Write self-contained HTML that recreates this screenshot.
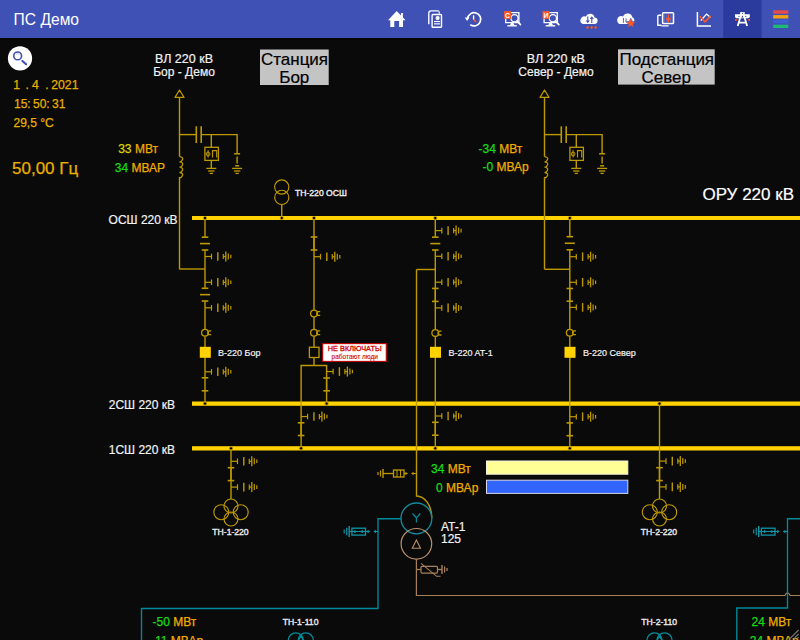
<!DOCTYPE html>
<html><head><meta charset="utf-8"><title>ПС Демо</title>
<style>
html,body{margin:0;padding:0;background:#0a0a0a;width:800px;height:640px;overflow:hidden;font-family:"Liberation Sans",sans-serif;}
svg{position:absolute;left:0;top:0;display:block;}
text{font-family:"Liberation Sans",sans-serif;}
</style></head><body>
<svg width="800" height="640" viewBox="0 0 800 640">
<rect x="0" y="0" width="800" height="640" fill="#0a0a0a"/>
<rect x="192" y="216" width="608" height="4" fill="#ffd200"/>
<rect x="192" y="401.5" width="608" height="4.3" fill="#ffd200"/>
<rect x="192" y="446.2" width="608" height="4.3" fill="#ffd200"/>
<path d="M179.5,90 L175.0,97.4 H184.0 Z" stroke="#bd9900" stroke-width="1.2" fill="none" stroke-linejoin="round"/>
<line x1="179.5" y1="97.4" x2="179.5" y2="156.6" stroke="#bd9900" stroke-width="1.4"/>
<path d="M179.5,156.6 q4,0.5 3,3 q-1,2.5 -3,2.3 q4,0.5 3,3 q-1,2.5 -3,2.3 q4,0.5 3,3 q-1,2.5 -3,2.3 q4,0.5 3,3 q-1,2.5 -3,2.3" stroke="#bd9900" stroke-width="1.3" fill="none"/>
<line x1="179.5" y1="176.9" x2="179.5" y2="269.3" stroke="#bd9900" stroke-width="1.4"/>
<line x1="179.5" y1="134.6" x2="196.3" y2="134.6" stroke="#bd9900" stroke-width="1.4"/>
<line x1="196.3" y1="126.3" x2="196.3" y2="143" stroke="#bd9900" stroke-width="1.6"/>
<line x1="201.2" y1="126.3" x2="201.2" y2="143" stroke="#bd9900" stroke-width="1.6"/>
<path d="M201.2,134.6 H237.1 V153.8" stroke="#bd9900" stroke-width="1.4" fill="none"/>
<line x1="211.3" y1="134.6" x2="211.3" y2="147.3" stroke="#bd9900" stroke-width="1.4"/>
<rect x="204.9" y="147.3" width="13.5" height="13.1" fill="none" stroke="#bd9900" stroke-width="1.3"/>
<path d="M208.1,150.3 V157.6 M212.5,157.6 V150.6 H216.7 V157.6" stroke="#bd9900" stroke-width="1.1" fill="none"/>
<ellipse cx="208.1" cy="154" rx="1.9" ry="1.9" fill="none" stroke="#bd9900" stroke-width="1"/>
<line x1="211.3" y1="160.4" x2="211.3" y2="168.4" stroke="#bd9900" stroke-width="1.4"/>
<line x1="206.3" y1="168.4" x2="216.3" y2="168.4" stroke="#bd9900" stroke-width="1.3"/>
<line x1="208.10000000000002" y1="171.0" x2="214.5" y2="171.0" stroke="#bd9900" stroke-width="1.3"/>
<line x1="209.70000000000002" y1="173.4" x2="212.9" y2="173.4" stroke="#bd9900" stroke-width="1.3"/>
<line x1="234.1" y1="153.8" x2="240.1" y2="153.8" stroke="#bd9900" stroke-width="1.5"/>
<line x1="237.1" y1="156.5" x2="237.1" y2="163.5" stroke="#bd9900" stroke-width="1.4"/>
<line x1="235.1" y1="165.8" x2="239.1" y2="165.8" stroke="#bd9900" stroke-width="1.5"/>
<line x1="232.1" y1="168.4" x2="242.1" y2="168.4" stroke="#bd9900" stroke-width="1.3"/>
<line x1="233.9" y1="171.0" x2="240.29999999999998" y2="171.0" stroke="#bd9900" stroke-width="1.3"/>
<line x1="235.5" y1="173.4" x2="238.7" y2="173.4" stroke="#bd9900" stroke-width="1.3"/>
<path d="M544.5,90 L540.0,97.4 H549.0 Z" stroke="#bd9900" stroke-width="1.2" fill="none" stroke-linejoin="round"/>
<line x1="544.5" y1="97.4" x2="544.5" y2="156.6" stroke="#bd9900" stroke-width="1.4"/>
<path d="M544.5,156.6 q4,0.5 3,3 q-1,2.5 -3,2.3 q4,0.5 3,3 q-1,2.5 -3,2.3 q4,0.5 3,3 q-1,2.5 -3,2.3 q4,0.5 3,3 q-1,2.5 -3,2.3" stroke="#bd9900" stroke-width="1.3" fill="none"/>
<line x1="544.5" y1="176.9" x2="544.5" y2="269.3" stroke="#bd9900" stroke-width="1.4"/>
<line x1="544.5" y1="134.6" x2="561.3" y2="134.6" stroke="#bd9900" stroke-width="1.4"/>
<line x1="561.3" y1="126.3" x2="561.3" y2="143" stroke="#bd9900" stroke-width="1.6"/>
<line x1="566.2" y1="126.3" x2="566.2" y2="143" stroke="#bd9900" stroke-width="1.6"/>
<path d="M566.2,134.6 H602.1 V153.8" stroke="#bd9900" stroke-width="1.4" fill="none"/>
<line x1="576.3" y1="134.6" x2="576.3" y2="147.3" stroke="#bd9900" stroke-width="1.4"/>
<rect x="569.9" y="147.3" width="13.5" height="13.1" fill="none" stroke="#bd9900" stroke-width="1.3"/>
<path d="M573.1,150.3 V157.6 M577.5,157.6 V150.6 H581.7 V157.6" stroke="#bd9900" stroke-width="1.1" fill="none"/>
<ellipse cx="573.1" cy="154" rx="1.9" ry="1.9" fill="none" stroke="#bd9900" stroke-width="1"/>
<line x1="576.3" y1="160.4" x2="576.3" y2="168.4" stroke="#bd9900" stroke-width="1.4"/>
<line x1="571.3" y1="168.4" x2="581.3" y2="168.4" stroke="#bd9900" stroke-width="1.3"/>
<line x1="573.0999999999999" y1="171.0" x2="579.5" y2="171.0" stroke="#bd9900" stroke-width="1.3"/>
<line x1="574.6999999999999" y1="173.4" x2="577.9" y2="173.4" stroke="#bd9900" stroke-width="1.3"/>
<line x1="599.1" y1="153.8" x2="605.1" y2="153.8" stroke="#bd9900" stroke-width="1.5"/>
<line x1="602.1" y1="156.5" x2="602.1" y2="163.5" stroke="#bd9900" stroke-width="1.4"/>
<line x1="600.1" y1="165.8" x2="604.1" y2="165.8" stroke="#bd9900" stroke-width="1.5"/>
<line x1="597.1" y1="168.4" x2="607.1" y2="168.4" stroke="#bd9900" stroke-width="1.3"/>
<line x1="598.9" y1="171.0" x2="605.3000000000001" y2="171.0" stroke="#bd9900" stroke-width="1.3"/>
<line x1="600.5" y1="173.4" x2="603.7" y2="173.4" stroke="#bd9900" stroke-width="1.3"/>
<line x1="179.5" y1="269" x2="205" y2="269" stroke="#bd9900" stroke-width="1.4"/>
<line x1="544.5" y1="269.3" x2="569.8" y2="269.3" stroke="#bd9900" stroke-width="1.4"/>
<circle cx="281.75" cy="187" r="7.1" fill="none" stroke="#bd9900" stroke-width="1.15"/>
<circle cx="281.75" cy="197.4" r="7.1" fill="none" stroke="#bd9900" stroke-width="1.15"/>
<line x1="281.75" y1="204.5" x2="281.75" y2="218" stroke="#bd9900" stroke-width="1.4"/>
<line x1="205" y1="218" x2="205" y2="237.2" stroke="#bd9900" stroke-width="1.4"/>
<line x1="201.7" y1="237.2" x2="208.3" y2="237.2" stroke="#bd9900" stroke-width="1.6"/>
<line x1="201.7" y1="250" x2="208.3" y2="250" stroke="#bd9900" stroke-width="1.6"/>
<line x1="200" y1="243.6" x2="210" y2="243.6" stroke="#bd9900" stroke-width="1.6"/>
<line x1="205" y1="250" x2="205" y2="288.3" stroke="#bd9900" stroke-width="1.4"/>
<line x1="205" y1="256.5" x2="211.5" y2="256.5" stroke="#bd9900" stroke-width="1.2"/>
<line x1="211.5" y1="253.7" x2="211.5" y2="259.3" stroke="#bd9900" stroke-width="1.2"/>
<line x1="217.8" y1="252.2" x2="217.8" y2="260.8" stroke="#bd9900" stroke-width="1.4"/>
<line x1="223.3" y1="253.9" x2="223.3" y2="259.1" stroke="#bd9900" stroke-width="1.2"/>
<line x1="223.3" y1="256.5" x2="225.8" y2="256.5" stroke="#bd9900" stroke-width="1.2"/>
<line x1="225.8" y1="251.5" x2="225.8" y2="261.5" stroke="#bd9900" stroke-width="1.3"/>
<line x1="228.3" y1="253.5" x2="228.3" y2="259.5" stroke="#bd9900" stroke-width="1.2"/>
<line x1="230.8" y1="254.7" x2="230.8" y2="258.3" stroke="#bd9900" stroke-width="1.2"/>
<line x1="205" y1="282.3" x2="211.5" y2="282.3" stroke="#bd9900" stroke-width="1.2"/>
<line x1="211.5" y1="279.5" x2="211.5" y2="285.1" stroke="#bd9900" stroke-width="1.2"/>
<line x1="217.8" y1="278.0" x2="217.8" y2="286.6" stroke="#bd9900" stroke-width="1.4"/>
<line x1="223.3" y1="279.7" x2="223.3" y2="284.90000000000003" stroke="#bd9900" stroke-width="1.2"/>
<line x1="223.3" y1="282.3" x2="225.8" y2="282.3" stroke="#bd9900" stroke-width="1.2"/>
<line x1="225.8" y1="277.3" x2="225.8" y2="287.3" stroke="#bd9900" stroke-width="1.3"/>
<line x1="228.3" y1="279.3" x2="228.3" y2="285.3" stroke="#bd9900" stroke-width="1.2"/>
<line x1="230.8" y1="280.5" x2="230.8" y2="284.1" stroke="#bd9900" stroke-width="1.2"/>
<line x1="201.7" y1="288.3" x2="208.3" y2="288.3" stroke="#bd9900" stroke-width="1.6"/>
<line x1="201.7" y1="301" x2="208.3" y2="301" stroke="#bd9900" stroke-width="1.6"/>
<line x1="200" y1="294.65" x2="210" y2="294.65" stroke="#bd9900" stroke-width="1.6"/>
<line x1="205" y1="301" x2="205" y2="329.2" stroke="#bd9900" stroke-width="1.4"/>
<line x1="205" y1="307.8" x2="211.5" y2="307.8" stroke="#bd9900" stroke-width="1.2"/>
<line x1="211.5" y1="305.0" x2="211.5" y2="310.6" stroke="#bd9900" stroke-width="1.2"/>
<line x1="217.8" y1="303.5" x2="217.8" y2="312.1" stroke="#bd9900" stroke-width="1.4"/>
<line x1="223.3" y1="305.2" x2="223.3" y2="310.40000000000003" stroke="#bd9900" stroke-width="1.2"/>
<line x1="223.3" y1="307.8" x2="225.8" y2="307.8" stroke="#bd9900" stroke-width="1.2"/>
<line x1="225.8" y1="302.8" x2="225.8" y2="312.8" stroke="#bd9900" stroke-width="1.3"/>
<line x1="228.3" y1="304.8" x2="228.3" y2="310.8" stroke="#bd9900" stroke-width="1.2"/>
<line x1="230.8" y1="306.0" x2="230.8" y2="309.6" stroke="#bd9900" stroke-width="1.2"/>
<circle cx="205" cy="332.8" r="3.4" fill="none" stroke="#bd9900" stroke-width="1.3"/>
<path d="M211.2,330.90000000000003 H209.6 A1.9,1.9 0 0 0 209.6,334.7 H211.2" stroke="#bd9900" stroke-width="1.3" fill="none"/>
<line x1="205" y1="336.4" x2="205" y2="377.8" stroke="#bd9900" stroke-width="1.4"/>
<rect x="199.8" y="346.8" width="11" height="11" fill="#ffd200"/>
<line x1="205" y1="371.8" x2="211.5" y2="371.8" stroke="#bd9900" stroke-width="1.2"/>
<line x1="211.5" y1="369.0" x2="211.5" y2="374.6" stroke="#bd9900" stroke-width="1.2"/>
<line x1="217.8" y1="367.5" x2="217.8" y2="376.1" stroke="#bd9900" stroke-width="1.4"/>
<line x1="223.3" y1="369.2" x2="223.3" y2="374.40000000000003" stroke="#bd9900" stroke-width="1.2"/>
<line x1="223.3" y1="371.8" x2="225.8" y2="371.8" stroke="#bd9900" stroke-width="1.2"/>
<line x1="225.8" y1="366.8" x2="225.8" y2="376.8" stroke="#bd9900" stroke-width="1.3"/>
<line x1="228.3" y1="368.8" x2="228.3" y2="374.8" stroke="#bd9900" stroke-width="1.2"/>
<line x1="230.8" y1="370.0" x2="230.8" y2="373.6" stroke="#bd9900" stroke-width="1.2"/>
<line x1="201.7" y1="377.8" x2="208.3" y2="377.8" stroke="#bd9900" stroke-width="1.6"/>
<line x1="201.7" y1="390.8" x2="208.3" y2="390.8" stroke="#bd9900" stroke-width="1.6"/>
<line x1="205" y1="377.8" x2="205" y2="390.8" stroke="#bd9900" stroke-width="1.4"/>
<line x1="205" y1="390.8" x2="205" y2="403.5" stroke="#bd9900" stroke-width="1.4"/>
<line x1="314" y1="218" x2="314" y2="309.9" stroke="#bd9900" stroke-width="1.4"/>
<line x1="310.7" y1="237" x2="317.3" y2="237" stroke="#bd9900" stroke-width="1.6"/>
<line x1="310.7" y1="250" x2="317.3" y2="250" stroke="#bd9900" stroke-width="1.6"/>
<line x1="314" y1="237" x2="314" y2="250" stroke="#bd9900" stroke-width="1.4"/>
<line x1="314" y1="256.7" x2="320.5" y2="256.7" stroke="#bd9900" stroke-width="1.2"/>
<line x1="320.5" y1="253.89999999999998" x2="320.5" y2="259.5" stroke="#bd9900" stroke-width="1.2"/>
<line x1="326.8" y1="252.39999999999998" x2="326.8" y2="261.0" stroke="#bd9900" stroke-width="1.4"/>
<line x1="332.3" y1="254.1" x2="332.3" y2="259.3" stroke="#bd9900" stroke-width="1.2"/>
<line x1="332.3" y1="256.7" x2="334.8" y2="256.7" stroke="#bd9900" stroke-width="1.2"/>
<line x1="334.8" y1="251.7" x2="334.8" y2="261.7" stroke="#bd9900" stroke-width="1.3"/>
<line x1="337.3" y1="253.7" x2="337.3" y2="259.7" stroke="#bd9900" stroke-width="1.2"/>
<line x1="339.8" y1="254.89999999999998" x2="339.8" y2="258.5" stroke="#bd9900" stroke-width="1.2"/>
<circle cx="314" cy="313.5" r="3.4" fill="none" stroke="#bd9900" stroke-width="1.3"/>
<path d="M320.2,311.6 H318.6 A1.9,1.9 0 0 0 318.6,315.4 H320.2" stroke="#bd9900" stroke-width="1.3" fill="none"/>
<line x1="314" y1="317.1" x2="314" y2="329.15" stroke="#bd9900" stroke-width="1.4"/>
<circle cx="314" cy="332.75" r="3.4" fill="none" stroke="#bd9900" stroke-width="1.3"/>
<path d="M320.2,330.85 H318.6 A1.9,1.9 0 0 0 318.6,334.65 H320.2" stroke="#bd9900" stroke-width="1.3" fill="none"/>
<line x1="314" y1="336.35" x2="314" y2="347.25" stroke="#bd9900" stroke-width="1.4"/>
<rect x="309.4" y="347.25" width="9.6" height="10.25" fill="none" stroke="#bd9900" stroke-width="1.3"/>
<line x1="314" y1="357.5" x2="314" y2="365.5" stroke="#bd9900" stroke-width="1.4"/>
<path d="M301.1,448.3 V365.5 H326.6 V403.5" stroke="#bd9900" stroke-width="1.4" fill="none"/>
<line x1="326.6" y1="371.55" x2="333.1" y2="371.55" stroke="#bd9900" stroke-width="1.2"/>
<line x1="333.1" y1="368.75" x2="333.1" y2="374.35" stroke="#bd9900" stroke-width="1.2"/>
<line x1="339.40000000000003" y1="367.25" x2="339.40000000000003" y2="375.85" stroke="#bd9900" stroke-width="1.4"/>
<line x1="344.90000000000003" y1="368.95" x2="344.90000000000003" y2="374.15000000000003" stroke="#bd9900" stroke-width="1.2"/>
<line x1="344.90000000000003" y1="371.55" x2="347.40000000000003" y2="371.55" stroke="#bd9900" stroke-width="1.2"/>
<line x1="347.40000000000003" y1="366.55" x2="347.40000000000003" y2="376.55" stroke="#bd9900" stroke-width="1.3"/>
<line x1="349.90000000000003" y1="368.55" x2="349.90000000000003" y2="374.55" stroke="#bd9900" stroke-width="1.2"/>
<line x1="352.40000000000003" y1="369.75" x2="352.40000000000003" y2="373.35" stroke="#bd9900" stroke-width="1.2"/>
<line x1="323.3" y1="378" x2="329.90000000000003" y2="378" stroke="#bd9900" stroke-width="1.6"/>
<line x1="323.3" y1="390.8" x2="329.90000000000003" y2="390.8" stroke="#bd9900" stroke-width="1.6"/>
<line x1="326.6" y1="378" x2="326.6" y2="390.8" stroke="#bd9900" stroke-width="1.4"/>
<line x1="301.1" y1="416.55" x2="307.6" y2="416.55" stroke="#bd9900" stroke-width="1.2"/>
<line x1="307.6" y1="413.75" x2="307.6" y2="419.35" stroke="#bd9900" stroke-width="1.2"/>
<line x1="313.90000000000003" y1="412.25" x2="313.90000000000003" y2="420.85" stroke="#bd9900" stroke-width="1.4"/>
<line x1="319.40000000000003" y1="413.95" x2="319.40000000000003" y2="419.15000000000003" stroke="#bd9900" stroke-width="1.2"/>
<line x1="319.40000000000003" y1="416.55" x2="321.90000000000003" y2="416.55" stroke="#bd9900" stroke-width="1.2"/>
<line x1="321.90000000000003" y1="411.55" x2="321.90000000000003" y2="421.55" stroke="#bd9900" stroke-width="1.3"/>
<line x1="324.40000000000003" y1="413.55" x2="324.40000000000003" y2="419.55" stroke="#bd9900" stroke-width="1.2"/>
<line x1="326.90000000000003" y1="414.75" x2="326.90000000000003" y2="418.35" stroke="#bd9900" stroke-width="1.2"/>
<line x1="297.8" y1="422.8" x2="304.40000000000003" y2="422.8" stroke="#bd9900" stroke-width="1.6"/>
<line x1="297.8" y1="435.5" x2="304.40000000000003" y2="435.5" stroke="#bd9900" stroke-width="1.6"/>
<line x1="301.1" y1="422.8" x2="301.1" y2="435.5" stroke="#bd9900" stroke-width="1.4"/>
<line x1="435.3" y1="218" x2="435.3" y2="237.2" stroke="#bd9900" stroke-width="1.4"/>
<line x1="435.3" y1="230.60000000000002" x2="441.8" y2="230.60000000000002" stroke="#bd9900" stroke-width="1.2"/>
<line x1="441.8" y1="227.8" x2="441.8" y2="233.40000000000003" stroke="#bd9900" stroke-width="1.2"/>
<line x1="448.1" y1="226.3" x2="448.1" y2="234.90000000000003" stroke="#bd9900" stroke-width="1.4"/>
<line x1="453.6" y1="228.00000000000003" x2="453.6" y2="233.20000000000002" stroke="#bd9900" stroke-width="1.2"/>
<line x1="453.6" y1="230.60000000000002" x2="456.1" y2="230.60000000000002" stroke="#bd9900" stroke-width="1.2"/>
<line x1="456.1" y1="225.60000000000002" x2="456.1" y2="235.60000000000002" stroke="#bd9900" stroke-width="1.3"/>
<line x1="458.6" y1="227.60000000000002" x2="458.6" y2="233.60000000000002" stroke="#bd9900" stroke-width="1.2"/>
<line x1="461.1" y1="228.8" x2="461.1" y2="232.40000000000003" stroke="#bd9900" stroke-width="1.2"/>
<line x1="432.0" y1="237.2" x2="438.6" y2="237.2" stroke="#bd9900" stroke-width="1.6"/>
<line x1="432.0" y1="250" x2="438.6" y2="250" stroke="#bd9900" stroke-width="1.6"/>
<line x1="430.3" y1="243.6" x2="440.3" y2="243.6" stroke="#bd9900" stroke-width="1.6"/>
<line x1="435.3" y1="250" x2="435.3" y2="329.5" stroke="#bd9900" stroke-width="1.4"/>
<line x1="435.3" y1="256.3" x2="441.8" y2="256.3" stroke="#bd9900" stroke-width="1.2"/>
<line x1="441.8" y1="253.5" x2="441.8" y2="259.1" stroke="#bd9900" stroke-width="1.2"/>
<line x1="448.1" y1="252.0" x2="448.1" y2="260.6" stroke="#bd9900" stroke-width="1.4"/>
<line x1="453.6" y1="253.70000000000002" x2="453.6" y2="258.90000000000003" stroke="#bd9900" stroke-width="1.2"/>
<line x1="453.6" y1="256.3" x2="456.1" y2="256.3" stroke="#bd9900" stroke-width="1.2"/>
<line x1="456.1" y1="251.3" x2="456.1" y2="261.3" stroke="#bd9900" stroke-width="1.3"/>
<line x1="458.6" y1="253.3" x2="458.6" y2="259.3" stroke="#bd9900" stroke-width="1.2"/>
<line x1="461.1" y1="254.5" x2="461.1" y2="258.1" stroke="#bd9900" stroke-width="1.2"/>
<line x1="435.3" y1="282.2" x2="441.8" y2="282.2" stroke="#bd9900" stroke-width="1.2"/>
<line x1="441.8" y1="279.4" x2="441.8" y2="285.0" stroke="#bd9900" stroke-width="1.2"/>
<line x1="448.1" y1="277.9" x2="448.1" y2="286.5" stroke="#bd9900" stroke-width="1.4"/>
<line x1="453.6" y1="279.59999999999997" x2="453.6" y2="284.8" stroke="#bd9900" stroke-width="1.2"/>
<line x1="453.6" y1="282.2" x2="456.1" y2="282.2" stroke="#bd9900" stroke-width="1.2"/>
<line x1="456.1" y1="277.2" x2="456.1" y2="287.2" stroke="#bd9900" stroke-width="1.3"/>
<line x1="458.6" y1="279.2" x2="458.6" y2="285.2" stroke="#bd9900" stroke-width="1.2"/>
<line x1="461.1" y1="280.4" x2="461.1" y2="284.0" stroke="#bd9900" stroke-width="1.2"/>
<line x1="432.0" y1="288.4" x2="438.6" y2="288.4" stroke="#bd9900" stroke-width="1.6"/>
<line x1="432.0" y1="301.4" x2="438.6" y2="301.4" stroke="#bd9900" stroke-width="1.6"/>
<line x1="435.3" y1="288.4" x2="435.3" y2="301.4" stroke="#bd9900" stroke-width="1.4"/>
<line x1="435.3" y1="307.90000000000003" x2="441.8" y2="307.90000000000003" stroke="#bd9900" stroke-width="1.2"/>
<line x1="441.8" y1="305.1" x2="441.8" y2="310.70000000000005" stroke="#bd9900" stroke-width="1.2"/>
<line x1="448.1" y1="303.6" x2="448.1" y2="312.20000000000005" stroke="#bd9900" stroke-width="1.4"/>
<line x1="453.6" y1="305.3" x2="453.6" y2="310.50000000000006" stroke="#bd9900" stroke-width="1.2"/>
<line x1="453.6" y1="307.90000000000003" x2="456.1" y2="307.90000000000003" stroke="#bd9900" stroke-width="1.2"/>
<line x1="456.1" y1="302.90000000000003" x2="456.1" y2="312.90000000000003" stroke="#bd9900" stroke-width="1.3"/>
<line x1="458.6" y1="304.90000000000003" x2="458.6" y2="310.90000000000003" stroke="#bd9900" stroke-width="1.2"/>
<line x1="461.1" y1="306.1" x2="461.1" y2="309.70000000000005" stroke="#bd9900" stroke-width="1.2"/>
<circle cx="435.3" cy="333.1" r="3.4" fill="none" stroke="#bd9900" stroke-width="1.3"/>
<path d="M441.5,331.20000000000005 H439.90000000000003 A1.9,1.9 0 0 0 439.90000000000003,335.0 H441.5" stroke="#bd9900" stroke-width="1.3" fill="none"/>
<line x1="435.3" y1="336.7" x2="435.3" y2="448.3" stroke="#bd9900" stroke-width="1.4"/>
<rect x="430" y="346.8" width="11" height="11" fill="#ffd200"/>
<line x1="435.3" y1="416.0" x2="441.8" y2="416.0" stroke="#bd9900" stroke-width="1.2"/>
<line x1="441.8" y1="413.2" x2="441.8" y2="418.8" stroke="#bd9900" stroke-width="1.2"/>
<line x1="448.1" y1="411.7" x2="448.1" y2="420.3" stroke="#bd9900" stroke-width="1.4"/>
<line x1="453.6" y1="413.4" x2="453.6" y2="418.6" stroke="#bd9900" stroke-width="1.2"/>
<line x1="453.6" y1="416.0" x2="456.1" y2="416.0" stroke="#bd9900" stroke-width="1.2"/>
<line x1="456.1" y1="411.0" x2="456.1" y2="421.0" stroke="#bd9900" stroke-width="1.3"/>
<line x1="458.6" y1="413.0" x2="458.6" y2="419.0" stroke="#bd9900" stroke-width="1.2"/>
<line x1="461.1" y1="414.2" x2="461.1" y2="417.8" stroke="#bd9900" stroke-width="1.2"/>
<line x1="432.0" y1="422.3" x2="438.6" y2="422.3" stroke="#bd9900" stroke-width="1.6"/>
<line x1="432.0" y1="435.2" x2="438.6" y2="435.2" stroke="#bd9900" stroke-width="1.6"/>
<line x1="435.3" y1="422.3" x2="435.3" y2="435.2" stroke="#bd9900" stroke-width="1.4"/>
<line x1="416.5" y1="269.5" x2="435.3" y2="269.5" stroke="#bd9900" stroke-width="1.4"/>
<line x1="569.8" y1="218" x2="569.8" y2="236.7" stroke="#bd9900" stroke-width="1.4"/>
<line x1="566.5" y1="236.7" x2="573.0999999999999" y2="236.7" stroke="#bd9900" stroke-width="1.6"/>
<line x1="566.5" y1="249.8" x2="573.0999999999999" y2="249.8" stroke="#bd9900" stroke-width="1.6"/>
<line x1="564.8" y1="243.25" x2="574.8" y2="243.25" stroke="#bd9900" stroke-width="1.6"/>
<line x1="569.8" y1="249.8" x2="569.8" y2="329.1" stroke="#bd9900" stroke-width="1.4"/>
<line x1="569.8" y1="256.7" x2="576.3" y2="256.7" stroke="#bd9900" stroke-width="1.2"/>
<line x1="576.3" y1="253.89999999999998" x2="576.3" y2="259.5" stroke="#bd9900" stroke-width="1.2"/>
<line x1="582.5999999999999" y1="252.39999999999998" x2="582.5999999999999" y2="261.0" stroke="#bd9900" stroke-width="1.4"/>
<line x1="588.0999999999999" y1="254.1" x2="588.0999999999999" y2="259.3" stroke="#bd9900" stroke-width="1.2"/>
<line x1="588.0999999999999" y1="256.7" x2="590.5999999999999" y2="256.7" stroke="#bd9900" stroke-width="1.2"/>
<line x1="590.5999999999999" y1="251.7" x2="590.5999999999999" y2="261.7" stroke="#bd9900" stroke-width="1.3"/>
<line x1="593.0999999999999" y1="253.7" x2="593.0999999999999" y2="259.7" stroke="#bd9900" stroke-width="1.2"/>
<line x1="595.5999999999999" y1="254.89999999999998" x2="595.5999999999999" y2="258.5" stroke="#bd9900" stroke-width="1.2"/>
<line x1="569.8" y1="282.3" x2="576.3" y2="282.3" stroke="#bd9900" stroke-width="1.2"/>
<line x1="576.3" y1="279.5" x2="576.3" y2="285.1" stroke="#bd9900" stroke-width="1.2"/>
<line x1="582.5999999999999" y1="278.0" x2="582.5999999999999" y2="286.6" stroke="#bd9900" stroke-width="1.4"/>
<line x1="588.0999999999999" y1="279.7" x2="588.0999999999999" y2="284.90000000000003" stroke="#bd9900" stroke-width="1.2"/>
<line x1="588.0999999999999" y1="282.3" x2="590.5999999999999" y2="282.3" stroke="#bd9900" stroke-width="1.2"/>
<line x1="590.5999999999999" y1="277.3" x2="590.5999999999999" y2="287.3" stroke="#bd9900" stroke-width="1.3"/>
<line x1="593.0999999999999" y1="279.3" x2="593.0999999999999" y2="285.3" stroke="#bd9900" stroke-width="1.2"/>
<line x1="595.5999999999999" y1="280.5" x2="595.5999999999999" y2="284.1" stroke="#bd9900" stroke-width="1.2"/>
<line x1="566.5" y1="288.5" x2="573.0999999999999" y2="288.5" stroke="#bd9900" stroke-width="1.6"/>
<line x1="566.5" y1="301.2" x2="573.0999999999999" y2="301.2" stroke="#bd9900" stroke-width="1.6"/>
<line x1="569.8" y1="288.5" x2="569.8" y2="301.2" stroke="#bd9900" stroke-width="1.4"/>
<line x1="569.8" y1="307.40000000000003" x2="576.3" y2="307.40000000000003" stroke="#bd9900" stroke-width="1.2"/>
<line x1="576.3" y1="304.6" x2="576.3" y2="310.20000000000005" stroke="#bd9900" stroke-width="1.2"/>
<line x1="582.5999999999999" y1="303.1" x2="582.5999999999999" y2="311.70000000000005" stroke="#bd9900" stroke-width="1.4"/>
<line x1="588.0999999999999" y1="304.8" x2="588.0999999999999" y2="310.00000000000006" stroke="#bd9900" stroke-width="1.2"/>
<line x1="588.0999999999999" y1="307.40000000000003" x2="590.5999999999999" y2="307.40000000000003" stroke="#bd9900" stroke-width="1.2"/>
<line x1="590.5999999999999" y1="302.40000000000003" x2="590.5999999999999" y2="312.40000000000003" stroke="#bd9900" stroke-width="1.3"/>
<line x1="593.0999999999999" y1="304.40000000000003" x2="593.0999999999999" y2="310.40000000000003" stroke="#bd9900" stroke-width="1.2"/>
<line x1="595.5999999999999" y1="305.6" x2="595.5999999999999" y2="309.20000000000005" stroke="#bd9900" stroke-width="1.2"/>
<circle cx="569.8" cy="332.7" r="3.4" fill="none" stroke="#bd9900" stroke-width="1.3"/>
<path d="M576.0,330.8 H574.4 A1.9,1.9 0 0 0 574.4,334.59999999999997 H576.0" stroke="#bd9900" stroke-width="1.3" fill="none"/>
<line x1="569.8" y1="336.3" x2="569.8" y2="448.3" stroke="#bd9900" stroke-width="1.4"/>
<rect x="564.5" y="346.8" width="11" height="11" fill="#ffd200"/>
<line x1="569.8" y1="416.7" x2="576.3" y2="416.7" stroke="#bd9900" stroke-width="1.2"/>
<line x1="576.3" y1="413.9" x2="576.3" y2="419.5" stroke="#bd9900" stroke-width="1.2"/>
<line x1="582.5999999999999" y1="412.4" x2="582.5999999999999" y2="421.0" stroke="#bd9900" stroke-width="1.4"/>
<line x1="588.0999999999999" y1="414.09999999999997" x2="588.0999999999999" y2="419.3" stroke="#bd9900" stroke-width="1.2"/>
<line x1="588.0999999999999" y1="416.7" x2="590.5999999999999" y2="416.7" stroke="#bd9900" stroke-width="1.2"/>
<line x1="590.5999999999999" y1="411.7" x2="590.5999999999999" y2="421.7" stroke="#bd9900" stroke-width="1.3"/>
<line x1="593.0999999999999" y1="413.7" x2="593.0999999999999" y2="419.7" stroke="#bd9900" stroke-width="1.2"/>
<line x1="595.5999999999999" y1="414.9" x2="595.5999999999999" y2="418.5" stroke="#bd9900" stroke-width="1.2"/>
<line x1="566.5" y1="422.9" x2="573.0999999999999" y2="422.9" stroke="#bd9900" stroke-width="1.6"/>
<line x1="566.5" y1="435.7" x2="573.0999999999999" y2="435.7" stroke="#bd9900" stroke-width="1.6"/>
<line x1="569.8" y1="422.9" x2="569.8" y2="435.7" stroke="#bd9900" stroke-width="1.4"/>
<line x1="231" y1="448.3" x2="231" y2="499" stroke="#bd9900" stroke-width="1.4"/>
<line x1="231" y1="461.3" x2="237.5" y2="461.3" stroke="#bd9900" stroke-width="1.2"/>
<line x1="237.5" y1="458.5" x2="237.5" y2="464.1" stroke="#bd9900" stroke-width="1.2"/>
<line x1="243.8" y1="457.0" x2="243.8" y2="465.6" stroke="#bd9900" stroke-width="1.4"/>
<line x1="249.3" y1="458.7" x2="249.3" y2="463.90000000000003" stroke="#bd9900" stroke-width="1.2"/>
<line x1="249.3" y1="461.3" x2="251.8" y2="461.3" stroke="#bd9900" stroke-width="1.2"/>
<line x1="251.8" y1="456.3" x2="251.8" y2="466.3" stroke="#bd9900" stroke-width="1.3"/>
<line x1="254.3" y1="458.3" x2="254.3" y2="464.3" stroke="#bd9900" stroke-width="1.2"/>
<line x1="256.8" y1="459.5" x2="256.8" y2="463.1" stroke="#bd9900" stroke-width="1.2"/>
<line x1="227.7" y1="467.7" x2="234.3" y2="467.7" stroke="#bd9900" stroke-width="1.6"/>
<line x1="227.7" y1="480.6" x2="234.3" y2="480.6" stroke="#bd9900" stroke-width="1.6"/>
<line x1="231" y1="467.7" x2="231" y2="480.6" stroke="#bd9900" stroke-width="1.4"/>
<line x1="231" y1="487.1" x2="237.5" y2="487.1" stroke="#bd9900" stroke-width="1.2"/>
<line x1="237.5" y1="484.3" x2="237.5" y2="489.90000000000003" stroke="#bd9900" stroke-width="1.2"/>
<line x1="243.8" y1="482.8" x2="243.8" y2="491.40000000000003" stroke="#bd9900" stroke-width="1.4"/>
<line x1="249.3" y1="484.5" x2="249.3" y2="489.70000000000005" stroke="#bd9900" stroke-width="1.2"/>
<line x1="249.3" y1="487.1" x2="251.8" y2="487.1" stroke="#bd9900" stroke-width="1.2"/>
<line x1="251.8" y1="482.1" x2="251.8" y2="492.1" stroke="#bd9900" stroke-width="1.3"/>
<line x1="254.3" y1="484.1" x2="254.3" y2="490.1" stroke="#bd9900" stroke-width="1.2"/>
<line x1="256.8" y1="485.3" x2="256.8" y2="488.90000000000003" stroke="#bd9900" stroke-width="1.2"/>
<circle cx="231" cy="506" r="7" fill="none" stroke="#bd9900" stroke-width="1.15"/>
<circle cx="221.3" cy="512.2" r="7.5" fill="none" stroke="#bd9900" stroke-width="1.15"/>
<circle cx="240.7" cy="512.2" r="7.5" fill="none" stroke="#bd9900" stroke-width="1.15"/>
<circle cx="231" cy="519" r="7" fill="none" stroke="#bd9900" stroke-width="1.15"/>
<line x1="659.5" y1="403.5" x2="659.5" y2="499" stroke="#bd9900" stroke-width="1.4"/>
<line x1="659.5" y1="461.1" x2="666.0" y2="461.1" stroke="#bd9900" stroke-width="1.2"/>
<line x1="666.0" y1="458.3" x2="666.0" y2="463.90000000000003" stroke="#bd9900" stroke-width="1.2"/>
<line x1="672.3" y1="456.8" x2="672.3" y2="465.40000000000003" stroke="#bd9900" stroke-width="1.4"/>
<line x1="677.8" y1="458.5" x2="677.8" y2="463.70000000000005" stroke="#bd9900" stroke-width="1.2"/>
<line x1="677.8" y1="461.1" x2="680.3" y2="461.1" stroke="#bd9900" stroke-width="1.2"/>
<line x1="680.3" y1="456.1" x2="680.3" y2="466.1" stroke="#bd9900" stroke-width="1.3"/>
<line x1="682.8" y1="458.1" x2="682.8" y2="464.1" stroke="#bd9900" stroke-width="1.2"/>
<line x1="685.3" y1="459.3" x2="685.3" y2="462.90000000000003" stroke="#bd9900" stroke-width="1.2"/>
<line x1="656.2" y1="467.7" x2="662.8" y2="467.7" stroke="#bd9900" stroke-width="1.6"/>
<line x1="656.2" y1="480.6" x2="662.8" y2="480.6" stroke="#bd9900" stroke-width="1.6"/>
<line x1="659.5" y1="467.7" x2="659.5" y2="480.6" stroke="#bd9900" stroke-width="1.4"/>
<line x1="659.5" y1="486.90000000000003" x2="666.0" y2="486.90000000000003" stroke="#bd9900" stroke-width="1.2"/>
<line x1="666.0" y1="484.1" x2="666.0" y2="489.70000000000005" stroke="#bd9900" stroke-width="1.2"/>
<line x1="672.3" y1="482.6" x2="672.3" y2="491.20000000000005" stroke="#bd9900" stroke-width="1.4"/>
<line x1="677.8" y1="484.3" x2="677.8" y2="489.50000000000006" stroke="#bd9900" stroke-width="1.2"/>
<line x1="677.8" y1="486.90000000000003" x2="680.3" y2="486.90000000000003" stroke="#bd9900" stroke-width="1.2"/>
<line x1="680.3" y1="481.90000000000003" x2="680.3" y2="491.90000000000003" stroke="#bd9900" stroke-width="1.3"/>
<line x1="682.8" y1="483.90000000000003" x2="682.8" y2="489.90000000000003" stroke="#bd9900" stroke-width="1.2"/>
<line x1="685.3" y1="485.1" x2="685.3" y2="488.70000000000005" stroke="#bd9900" stroke-width="1.2"/>
<circle cx="659.5" cy="506" r="7" fill="none" stroke="#bd9900" stroke-width="1.15"/>
<circle cx="649.8" cy="512.2" r="7.5" fill="none" stroke="#bd9900" stroke-width="1.15"/>
<circle cx="669.2" cy="512.2" r="7.5" fill="none" stroke="#bd9900" stroke-width="1.15"/>
<circle cx="659.5" cy="519" r="7" fill="none" stroke="#bd9900" stroke-width="1.15"/>
<circle cx="205" cy="218" r="1.6" fill="#000" stroke="#bd9900" stroke-width="0.9"/>
<circle cx="281.75" cy="218" r="1.6" fill="#000" stroke="#bd9900" stroke-width="0.9"/>
<circle cx="314" cy="218" r="1.6" fill="#000" stroke="#bd9900" stroke-width="0.9"/>
<circle cx="435.3" cy="218" r="1.6" fill="#000" stroke="#bd9900" stroke-width="0.9"/>
<circle cx="569.8" cy="218" r="1.6" fill="#000" stroke="#bd9900" stroke-width="0.9"/>
<circle cx="205" cy="403.6" r="1.6" fill="#000" stroke="#bd9900" stroke-width="0.9"/>
<circle cx="326.6" cy="403.6" r="1.6" fill="#000" stroke="#bd9900" stroke-width="0.9"/>
<circle cx="659.5" cy="403.6" r="1.6" fill="#000" stroke="#bd9900" stroke-width="0.9"/>
<circle cx="231" cy="448.3" r="1.6" fill="#000" stroke="#bd9900" stroke-width="0.9"/>
<circle cx="301.1" cy="448.3" r="1.6" fill="#000" stroke="#bd9900" stroke-width="0.9"/>
<circle cx="435.3" cy="448.3" r="1.6" fill="#000" stroke="#bd9900" stroke-width="0.9"/>
<circle cx="569.8" cy="448.3" r="1.6" fill="#000" stroke="#bd9900" stroke-width="0.9"/>
<path d="M416.5,269.5 V496 A15.3,22 0 0 1 431.8,518" stroke="#bd9900" stroke-width="1.4" fill="none"/>
<line x1="378" y1="472.0" x2="378" y2="475.0" stroke="#bd9900" stroke-width="1.2"/>
<line x1="380.5" y1="470.5" x2="380.5" y2="476.5" stroke="#bd9900" stroke-width="1.2"/>
<line x1="383" y1="469.0" x2="383" y2="478.0" stroke="#bd9900" stroke-width="1.4"/>
<line x1="383" y1="473.5" x2="393.5" y2="473.5" stroke="#bd9900" stroke-width="1.3"/>
<rect x="393.5" y="470.0" width="10.5" height="7" fill="none" stroke="#bd9900" stroke-width="1.3"/>
<line x1="397" y1="470.0" x2="397" y2="477.0" stroke="#bd9900" stroke-width="1"/>
<line x1="400.5" y1="470.0" x2="400.5" y2="477.0" stroke="#bd9900" stroke-width="1"/>
<line x1="404" y1="473.5" x2="406" y2="473.5" stroke="#bd9900" stroke-width="1.1"/>
<line x1="412" y1="473.5" x2="416.5" y2="473.5" stroke="#bd9900" stroke-width="1.1"/>
<path d="M408,473.5 L405.4,471.7 L405.4,475.3 Z M411,473.5 L413.6,471.7 L413.6,475.3 Z" fill="#bd9900"/>
<circle cx="416.4" cy="518.4" r="15.4" fill="none" stroke="#138a9c" stroke-width="1.3"/>
<path d="M412.5,513.5 L416.4,518 L420.3,513.5 M416.4,518 V522.5" stroke="#008a9a" stroke-width="1.2" fill="none"/>
<circle cx="416.4" cy="543.8" r="15.3" fill="none" stroke="#b8906a" stroke-width="1.2"/>
<path d="M416.4,540 L420.5,548.2 H412.3 Z" stroke="#b8906a" stroke-width="1.1" fill="none"/>
<path d="M416.4,559.2 V595.5 H784.8 q2.7,-5.4 5.4,0 H800" stroke="#a88058" stroke-width="1.2" fill="none"/>
<line x1="416.4" y1="569.5" x2="420.8" y2="569.5" stroke="#a88058" stroke-width="1.3"/>
<rect x="421" y="566.4" width="16.5" height="6.7" rx="1" fill="none" stroke="#a88058" stroke-width="1.2"/>
<path d="M421,563.3 L436.6,576.3 H440.6" stroke="#a88058" stroke-width="1.1" fill="none"/>
<line x1="437.5" y1="569.5" x2="442" y2="569.5" stroke="#a88058" stroke-width="1.3"/>
<line x1="442" y1="565.0" x2="442" y2="574.0" stroke="#a88058" stroke-width="1.4"/>
<line x1="444.6" y1="566.5" x2="444.6" y2="572.5" stroke="#a88058" stroke-width="1.2"/>
<line x1="447" y1="568.0" x2="447" y2="571.0" stroke="#a88058" stroke-width="1.3"/>
<path d="M401,518.75 H378 V608.5 H141.5 V640" stroke="#008a9a" stroke-width="1.35" fill="none"/>
<path d="M800,518.75 H787.5 V608 H736.8 V640" stroke="#008a9a" stroke-width="1.35" fill="none"/>
<line x1="344.2" y1="529.5" x2="344.2" y2="533.5" stroke="#0e95a6" stroke-width="1.2"/>
<line x1="346.7" y1="527.8" x2="346.7" y2="535.2" stroke="#0e95a6" stroke-width="1.2"/>
<line x1="349.2" y1="526.1" x2="349.2" y2="536.9" stroke="#0e95a6" stroke-width="1.4"/>
<line x1="349.2" y1="531.5" x2="368" y2="531.5" stroke="#0e95a6" stroke-width="1.1"/>
<line x1="374" y1="531.5" x2="378" y2="531.5" stroke="#0e95a6" stroke-width="1.1"/>
<rect x="351.9" y="528.2" width="13.6" height="6.9" fill="none" stroke="#0e95a6" stroke-width="1.3"/>
<path d="M357,531.5 L354.4,529.7 L354.4,533.3 Z M360.2,531.5 L362.8,529.7 L362.8,533.3 Z M370.2,531.5 L367.59999999999997,529.7 L367.59999999999997,533.3 Z M373.3,531.5 L375.90000000000003,529.7 L375.90000000000003,533.3 Z " fill="#0e95a6"/>
<line x1="753.7" y1="529.5" x2="753.7" y2="533.5" stroke="#0e95a6" stroke-width="1.2"/>
<line x1="756.2" y1="527.8" x2="756.2" y2="535.2" stroke="#0e95a6" stroke-width="1.2"/>
<line x1="758.7" y1="526.1" x2="758.7" y2="536.9" stroke="#0e95a6" stroke-width="1.4"/>
<line x1="758.7" y1="531.5" x2="777.5" y2="531.5" stroke="#0e95a6" stroke-width="1.1"/>
<line x1="783.5" y1="531.5" x2="787.5" y2="531.5" stroke="#0e95a6" stroke-width="1.1"/>
<rect x="761.4" y="528.2" width="13.6" height="6.9" fill="none" stroke="#0e95a6" stroke-width="1.3"/>
<path d="M766.5,531.5 L763.9,529.7 L763.9,533.3 Z M769.7,531.5 L772.3000000000001,529.7 L772.3000000000001,533.3 Z M779.7,531.5 L777.1,529.7 L777.1,533.3 Z M782.8,531.5 L785.4,529.7 L785.4,533.3 Z " fill="#0e95a6"/>
<circle cx="295.8" cy="640.3" r="7.5" fill="none" stroke="#008a9a" stroke-width="1.3"/>
<circle cx="305.8" cy="640.3" r="7.5" fill="none" stroke="#008a9a" stroke-width="1.3"/>
<path d="M300.8,636 L304.8,643 H296.8 Z" stroke="#008a9a" stroke-width="1.3" fill="none"/>
<circle cx="654.5" cy="640.3" r="7.5" fill="none" stroke="#008a9a" stroke-width="1.3"/>
<circle cx="664.5" cy="640.3" r="7.5" fill="none" stroke="#008a9a" stroke-width="1.3"/>
<path d="M659.5,636 L663.5,643 H655.5 Z" stroke="#008a9a" stroke-width="1.3" fill="none"/>
<text x="184" y="63.3" font-size="12.5" fill="#f2f2f2" text-anchor="middle" font-weight="normal" stroke="#f2f2f2" stroke-width="0.2">ВЛ 220 кВ</text>
<text x="184" y="76" font-size="12" fill="#f2f2f2" text-anchor="middle" font-weight="normal" stroke="#f2f2f2" stroke-width="0.2">Бор - Демо</text>
<text x="555.8" y="63" font-size="12.5" fill="#f2f2f2" text-anchor="middle" font-weight="normal" stroke="#f2f2f2" stroke-width="0.2">ВЛ 220 кВ</text>
<text x="556" y="75.6" font-size="12" fill="#f2f2f2" text-anchor="middle" font-weight="normal" stroke="#f2f2f2" stroke-width="0.2">Север - Демо</text>
<rect x="260" y="49.5" width="68.7" height="35.5" fill="#c4c4c4"/>
<text x="294.5" y="65.3" font-size="17" fill="#000" text-anchor="middle" font-weight="normal" stroke="#000" stroke-width="0.2">Станция</text>
<text x="294.3" y="82.8" font-size="17" fill="#000" text-anchor="middle" font-weight="normal" stroke="#000" stroke-width="0.2">Бор</text>
<rect x="618" y="49.3" width="96.7" height="35.3" fill="#c4c4c4"/>
<text x="666.8" y="65.2" font-size="17" fill="#000" text-anchor="middle" font-weight="normal" stroke="#000" stroke-width="0.2">Подстанция</text>
<text x="666.3" y="82.8" font-size="17" fill="#000" text-anchor="middle" font-weight="normal" stroke="#000" stroke-width="0.2">Север</text>
<text x="794" y="199.9" font-size="17" fill="#fff" text-anchor="end" font-weight="normal" stroke="#fff" stroke-width="0.2">ОРУ 220 кВ</text>
<text x="177.5" y="223.5" font-size="12" fill="#f2f2f2" text-anchor="end" font-weight="normal" stroke="#f2f2f2" stroke-width="0.2">ОСШ 220 кВ</text>
<text x="175" y="408.75" font-size="12" fill="#f2f2f2" text-anchor="end" font-weight="normal" stroke="#f2f2f2" stroke-width="0.2">2СШ 220 кВ</text>
<text x="175" y="453.5" font-size="12" fill="#f2f2f2" text-anchor="end" font-weight="normal" stroke="#f2f2f2" stroke-width="0.2">1СШ 220 кВ</text>
<text x="295" y="196.3" font-size="8.6" fill="#e8e8e8" text-anchor="start" font-weight="normal" stroke="#e8e8e8" stroke-width="0.4">TH-220 ОСШ</text>
<text x="218" y="355.7" font-size="9" fill="#f2f2f2" text-anchor="start" font-weight="normal" stroke="#f2f2f2" stroke-width="0.2">B-220 Бор</text>
<text x="448.5" y="355.7" font-size="9" fill="#f2f2f2" text-anchor="start" font-weight="normal" stroke="#f2f2f2" stroke-width="0.2">B-220 AT-1</text>
<text x="583" y="355.7" font-size="9" fill="#f2f2f2" text-anchor="start" font-weight="normal" stroke="#f2f2f2" stroke-width="0.2">B-220 Север</text>
<text x="230.5" y="534.8" font-size="8.6" fill="#e8e8e8" text-anchor="middle" font-weight="normal" stroke="#e8e8e8" stroke-width="0.4">TH-1-220</text>
<text x="659" y="534.8" font-size="8.6" fill="#e8e8e8" text-anchor="middle" font-weight="normal" stroke="#e8e8e8" stroke-width="0.4">TH-2-220</text>
<text x="300.6" y="624.6" font-size="8.6" fill="#e8e8e8" text-anchor="middle" font-weight="normal" stroke="#e8e8e8" stroke-width="0.4">TH-1-110</text>
<text x="659.2" y="624.6" font-size="8.6" fill="#e8e8e8" text-anchor="middle" font-weight="normal" stroke="#e8e8e8" stroke-width="0.4">TH-2-110</text>
<rect x="322.7" y="343.6" width="63.6" height="17.8" fill="#fff" stroke="#c00000" stroke-width="1.1"/>
<text x="354.8" y="351.1" font-size="7.35" fill="#d00000" text-anchor="middle" font-weight="normal" stroke="#d00000" stroke-width="0.3">НЕ ВКЛЮЧАТЬ!</text>
<text x="354.8" y="358.8" font-size="6.5" fill="#d00000" text-anchor="middle" font-weight="normal" stroke="#d00000" stroke-width="0.1">работают люди</text>
<text x="441" y="530.5" font-size="12" fill="#f2f2f2" text-anchor="start" font-weight="normal" stroke="#f2f2f2" stroke-width="0.2">AT-1</text>
<text x="441" y="543" font-size="12" fill="#f2f2f2" text-anchor="start" font-weight="normal" stroke="#f2f2f2" stroke-width="0.2">125</text>
<text x="118.2" y="152.8" font-size="12" stroke-width="0.25"><tspan fill="#d8d400" stroke="#d8d400">33</tspan><tspan fill="#f0ac00" stroke="#f0ac00"> МВт</tspan></text>
<text x="114.8" y="172" font-size="12" stroke-width="0.25"><tspan fill="#14dc14" stroke="#14dc14">34</tspan><tspan fill="#f0ac00" stroke="#f0ac00"> МВАР</tspan></text>
<text x="478.5" y="152.5" font-size="12" stroke-width="0.25"><tspan fill="#14dc14" stroke="#14dc14">-34</tspan><tspan fill="#f0ac00" stroke="#f0ac00"> МВт</tspan></text>
<text x="482.5" y="171.2" font-size="12" stroke-width="0.25"><tspan fill="#14dc14" stroke="#14dc14">-0</tspan><tspan fill="#f0ac00" stroke="#f0ac00"> МВАр</tspan></text>
<text x="431" y="472.5" font-size="12" stroke-width="0.25"><tspan fill="#14dc14" stroke="#14dc14">34</tspan><tspan fill="#f0ac00" stroke="#f0ac00"> МВт</tspan></text>
<text x="436" y="491.8" font-size="12" stroke-width="0.25"><tspan fill="#14dc14" stroke="#14dc14">0</tspan><tspan fill="#f0ac00" stroke="#f0ac00"> МВАр</tspan></text>
<text x="152.5" y="626.3" font-size="12" stroke-width="0.25"><tspan fill="#14dc14" stroke="#14dc14">-50</tspan><tspan fill="#f0ac00" stroke="#f0ac00"> МВт</tspan></text>
<text x="155" y="645.3" font-size="12" stroke-width="0.25"><tspan fill="#14dc14" stroke="#14dc14">11</tspan><tspan fill="#f0ac00" stroke="#f0ac00"> МВАр</tspan></text>
<text x="751.5" y="626" font-size="12" stroke-width="0.25"><tspan fill="#14dc14" stroke="#14dc14">24</tspan><tspan fill="#f0ac00" stroke="#f0ac00"> МВт</tspan></text>
<text x="749.8" y="645.3" font-size="12" stroke-width="0.25"><tspan fill="#14dc14" stroke="#14dc14">24</tspan><tspan fill="#f0ac00" stroke="#f0ac00"> МВАр</tspan></text>
<rect x="486.5" y="461" width="141.3" height="13.2" fill="#ffff96" stroke="#f4f4e0" stroke-width="1"/>
<rect x="486.5" y="480.2" width="141.3" height="13.2" fill="#3264ff" stroke="#d8d8e8" stroke-width="1"/>
<text y="88.9" font-size="12.2" fill="#e8b000" stroke="#e8b000" stroke-width="0.25"><tspan x="13.2">1</tspan><tspan x="25.6">.</tspan><tspan x="31.9">4</tspan><tspan x="45.2">.</tspan><tspan x="51.3">2021</tspan></text>
<text x="14" y="108" font-size="12" fill="#e8b000" text-anchor="start" font-weight="normal" stroke="#e8b000" stroke-width="0.25" word-spacing="-1">15: 50: 31</text>
<text x="13.5" y="126.7" font-size="12" fill="#e8b000" text-anchor="start" font-weight="normal" stroke="#e8b000" stroke-width="0.25">29,5 °C</text>
<text x="12" y="173.8" font-size="17" fill="#e8b000" text-anchor="start" font-weight="normal" stroke="#e8b000" stroke-width="0.25">50,00 Гц</text>
<!-- resize handle -->
<path d="M790,638.6 L798.6,630 M794,638.6 L798.6,634 M797.2,638.6 L798.6,637.2" stroke="#7a7a7a" stroke-width="1.1"/>
<!-- header -->
<rect x="0" y="38.5" width="800" height="1.5" fill="#000" opacity="0.6"/>
<rect x="0" y="0" width="800" height="38" fill="#3f51b5"/>
<text x="13.6" y="25.2" font-size="15.6" fill="#fff">ПС Демо</text>
<rect x="723.2" y="0" width="38.4" height="38" fill="#2b3b9d"/>
<path d="M396.7,11 L388,20.3 H390.3 V26.9 H394.3 V21.1 H399.1 V26.9 H403 V20.3 H405.6 L402.9,17.4 V13 H401 V15.4 Z" fill="#fff"/>
<path d="M431,10.9 H438.6 M428.8,13.2 V24.2" stroke="#fff" stroke-width="1.4" fill="none"/>
<path d="M431,10.9 Q428.8,11 428.8,13.2" stroke="#fff" stroke-width="1.4" fill="none"/>
<path d="M438.6,10.9 Q439.2,11 439.3,13.8" stroke="#fff" stroke-width="1.2" fill="none"/>
<rect x="432.1" y="14.5" width="9.4" height="12.7" rx="0.8" stroke="#fff" stroke-width="1.4" fill="none"/>
<circle cx="437.6" cy="18.1" r="2.1" fill="#fff"/><rect x="434" y="21" width="6" height="1.1" fill="#fff"/><rect x="434" y="23.2" width="6" height="1.3" fill="#e8e8f4"/>
<path d="M467.6,18.6 A6.6,6.6 0 1 1 470.3,24.7" stroke="#fff" stroke-width="1.7" fill="none"/>
<path d="M464.8,17.6 L469.4,17.6 L467.1,21 Z" fill="#fff"/>
<path d="M473.6,15.3 V19.6" stroke="#fff" stroke-width="1.4"/><path d="M474,19.9 L476.2,22" stroke="#ff5722" stroke-width="1.5"/>
<g transform="translate(500,0)"><path d="M7,12.6 H18.9 V22.6 H5.7 V18" stroke="#fff" stroke-width="1.3" fill="none"/><path d="M7.3,25.8 H16.8" stroke="#fff" stroke-width="1.4"/><path d="M11.2,22.8 L9.8,25.2 H14.6 L13.2,22.8 Z" fill="#fff"/><circle cx="14.5" cy="18.2" r="3.6" stroke="#fff" stroke-width="1.3" fill="#3f51b5"/><path d="M17.1,21 L20.4,24.6" stroke="#fff" stroke-width="1.7" stroke-linecap="round"/><rect x="4.1" y="11.1" width="6.9" height="7.7" fill="#ff5722"/><text x="7.55" y="17.6" font-size="7" font-weight="bold" fill="#fff" text-anchor="middle">C</text></g>
<g transform="translate(538.4,0)"><path d="M7,12.6 H18.9 V22.6 H5.7 V18" stroke="#fff" stroke-width="1.3" fill="none"/><path d="M7.3,25.8 H16.8" stroke="#fff" stroke-width="1.4"/><path d="M11.2,22.8 L9.8,25.2 H14.6 L13.2,22.8 Z" fill="#fff"/><circle cx="14.5" cy="18.2" r="3.6" stroke="#fff" stroke-width="1.3" fill="#3f51b5"/><path d="M17.1,21 L20.4,24.6" stroke="#fff" stroke-width="1.7" stroke-linecap="round"/><rect x="4.1" y="11.1" width="6.9" height="7.7" fill="#ff5722"/><text x="7.55" y="17.6" font-size="7" font-weight="bold" fill="#fff" text-anchor="middle">И</text></g>
<path d="M583,24 H594 A3.3,3.3 0 0 0 594.5,17.4 A4.6,4.6 0 0 0 585.8,16.6 A3.8,3.8 0 0 0 583,24 Z" fill="#fff"/>
<path d="M587.8,16.5 V22 M586.3,20.5 L587.8,22.3 L589.3,20.5 M591.8,23 V17.5 M590.3,19 L591.8,17.2 L593.3,19" stroke="#3f51b5" stroke-width="1.1" fill="none"/>
<circle cx="587.5" cy="27.5" r="1.2" fill="#ff5722"/><circle cx="591.6" cy="27.5" r="1.2" fill="#ff5722"/><circle cx="595.6" cy="27.5" r="1.2" fill="#ff5722"/>
<path d="M619.6,24 H630.6 A3.6,3.6 0 0 0 632.4,17.2 A5,5 0 0 0 623,16.4 A3.9,3.9 0 0 0 619.6,24 Z" fill="#fff"/>
<path d="M623.4,17.8 V22.8 M626,18.4 V22.2" stroke="#3f51b5" stroke-width="0.9"/>
<path d="M630.8,18.2 L632.3,21.4 L635.6,21.8 L633.1,24.1 L633.8,27.4 L630.8,25.7 L627.8,27.4 L628.5,24.1 L626,21.8 L629.3,21.4 Z" fill="#ff5722" stroke="#3f51b5" stroke-width="0.6"/>
<rect x="662.6" y="12.8" width="10.9" height="10.8" rx="0.8" stroke="#fff" stroke-width="1.5" fill="none"/>
<path d="M661.3,15.2 H658.4 A0.6,0.6 0 0 0 657.8,15.8 V25.2 H661.3 M661.3,25.9 H668.6" stroke="#fff" stroke-width="1.4" fill="none"/>
<path d="M664.5,14.6 V22 M666.2,14.6 V22 M670.4,14.6 V22 M672.1,14.6 V22" stroke="#7d8ad8" stroke-width="0.5"/>
<path d="M668.3,14.4 V18 M668.3,20.8 V22.6" stroke="#ff5722" stroke-width="1.5"/><path d="M665.6,18 H671 L669.4,20.9 H667.2 Z" fill="#ff5722"/>
<path d="M697.4,12 V26 H711" stroke="#fff" stroke-width="1.5" fill="none"/>
<path d="M700.8,20.5 L706.6,14.1 L710.5,17.6" stroke="#fff" stroke-width="1.3" fill="none"/>
<path d="M699.8,16.3 L705,21.8 L710.7,16.1" stroke="#ff5722" stroke-width="1.5" fill="none"/>
<rect x="740.1" y="12.1" width="4.6" height="2.8" fill="#fff"/>
<path d="M735,14.2 H749.8 V17.2 L748.2,18.2 H736.6 L735,17.2 Z" fill="#fff"/>
<path d="M740.2,17.6 L737.7,25.9 M744.6,17.6 L747.1,25.9 M738.8,22.6 H746" stroke="#fff" stroke-width="1.8" fill="none"/>
<path d="M742.4,15.4 L741.3,17.4 H743.5 Z" fill="#2b3b9d"/><circle cx="739" cy="16.3" r="0.6" fill="#2b3b9d"/><circle cx="745.8" cy="16.3" r="0.6" fill="#2b3b9d"/><rect x="742" y="12.8" width="0.8" height="1.2" fill="#2b3b9d"/>
<rect x="735" y="19" width="1.8" height="1.9" fill="#ff5722"/><rect x="748.2" y="19" width="1.8" height="1.9" fill="#ff5722"/>
<rect x="773.2" y="10.3" width="15.1" height="3.4" fill="#ea4949"/>
<rect x="773.2" y="15.1" width="15.1" height="3.4" fill="#f5a00e"/>
<rect x="773.2" y="19.9" width="15.1" height="3.3" fill="#3b5fd4"/>
<rect x="773.2" y="24.7" width="15.1" height="3.3" fill="#1eb977"/>
<!-- search button -->
<circle cx="20" cy="58.4" r="12.1" fill="#fff"/>
<circle cx="17.66" cy="55.9" r="3.9" stroke="#3f51b5" stroke-width="1.6" fill="none"/><path d="M16,54.2 Q17.6,53.2 19.3,54.2" stroke="#a8b2e0" stroke-width="0.7" fill="none"/>
<path d="M22.4,60.9 L26.1,64.3" stroke="#3f51b5" stroke-width="2.1" stroke-linecap="round"/>
</svg>
</body></html>
